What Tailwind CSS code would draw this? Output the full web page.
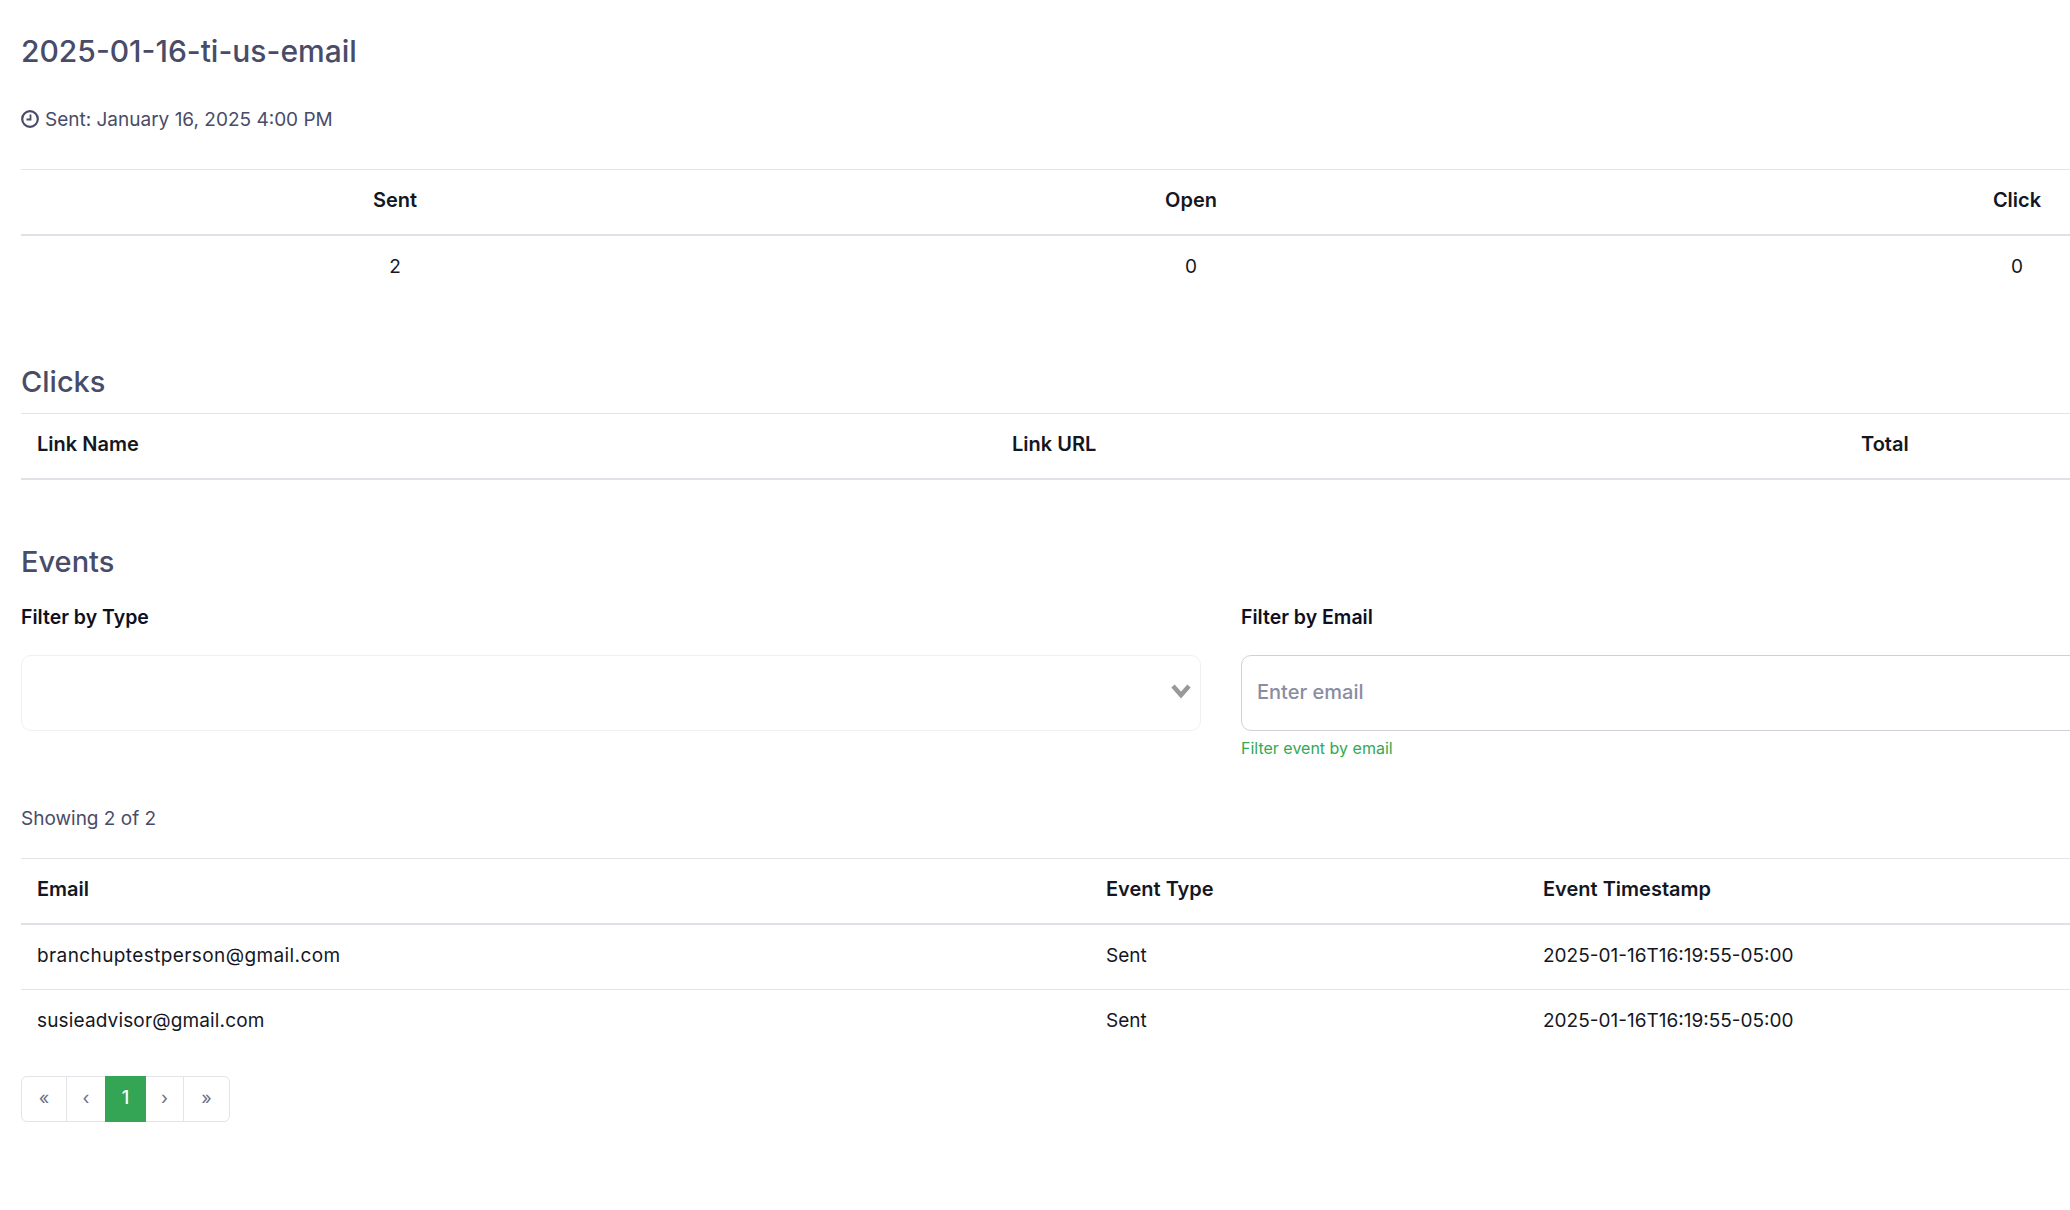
<!DOCTYPE html>
<html lang="en">
<head>
    <meta charset="UTF-8">
    <meta name="viewport" content="width=device-width, initial-scale=1.0">
    <title>2025-01-16-ti-us-email</title>
    <script src="https://cdn.jsdelivr.net/npm/@tailwindcss/browser@4"></script>
</head>
<body class="bg-white overflow-hidden h-screen font-['Inter',sans-serif] text-[19px] text-[#14171f]">
    <div class="w-[2421px] pl-[21px] pt-[31px]">
        <h1 class="text-[30px] leading-[40px] font-medium text-[#484c68]">2025-01-16-ti-us-email</h1>

        <div class="flex items-center gap-[6px] mt-[34px] h-[30px] text-[#484c68]">
            <svg class="w-[18px] h-[18px] -mt-[2px]" viewBox="0 0 18 18" fill="none" stroke="#484c68" stroke-width="2.2">
                <circle cx="9" cy="9" r="7.8"/>
                <path d="M9.5 4.5V9.5H5.5" stroke-width="1.8"/>
            </svg>
            <span>Sent: January 16, 2025 4:00 PM</span>
        </div>

        <!-- Summary -->
        <table class="mt-[34px] w-[2400px] table-fixed border-separate border-spacing-0 text-center">
            <thead>
                <tr>
                    <th class="w-[748px] h-[67px] pb-[4px] border-t border-b-2 border-t-[#e3e4e8] border-b-[#dee2e6] text-[20px] font-semibold">Sent</th>
                    <th class="w-[844px] h-[67px] pb-[4px] border-t border-b-2 border-t-[#e3e4e8] border-b-[#dee2e6] text-[20px] font-semibold">Open</th>
                    <th class="h-[67px] pb-[4px] border-t border-b-2 border-t-[#e3e4e8] border-b-[#dee2e6] text-[20px] font-semibold">Click</th>
                </tr>
            </thead>
            <tbody>
                <tr>
                    <td class="h-[64px] pb-[2px]">2</td>
                    <td class="h-[64px] pb-[2px]">0</td>
                    <td class="h-[64px] pb-[2px]">0</td>
                </tr>
            </tbody>
        </table>

        <!-- Clicks -->
        <h2 class="mt-[62px] mb-[11px] text-[29px] leading-[40px] font-medium text-[#484c68]">Clicks</h2>
        <table class="w-[2400px] table-fixed border-separate border-spacing-0 text-left">
            <thead>
                <tr>
                    <th class="w-[975px] h-[67px] px-4 pb-[4px] border-t border-b-2 border-t-[#e3e4e8] border-b-[#dee2e6] text-[20px] font-semibold">Link Name</th>
                    <th class="w-[849px] h-[67px] px-4 pb-[4px] border-t border-b-2 border-t-[#e3e4e8] border-b-[#dee2e6] text-[20px] font-semibold">Link URL</th>
                    <th class="h-[67px] px-4 pb-[4px] border-t border-b-2 border-t-[#e3e4e8] border-b-[#dee2e6] text-[20px] font-semibold">Total</th>
                </tr>
            </thead>
        </table>

        <!-- Events -->
        <h2 class="mt-[62px] text-[29px] leading-[40px] font-medium text-[#484c68]">Events</h2>
        <div class="grid grid-cols-[1180px_1fr] gap-x-[40px] mt-[20px]">
            <div>
                <label class="block h-[30px] leading-[30px] text-[19.5px] font-semibold text-[#0e1020]">Filter by Type</label>
                <div class="relative mt-[23px] h-[76px] rounded-[10px] border border-[#eff0f2] bg-white">
                    <svg class="absolute right-[9px] top-[27px] w-[20px] h-[16px]" viewBox="0 0 20 16" fill="none" stroke="#999999" stroke-width="4.5">
                        <path d="M2 3L10 12L18 3"/>
                    </svg>
                </div>
            </div>
            <div>
                <label class="block h-[30px] leading-[30px] text-[19.5px] font-semibold text-[#0e1020]">Filter by Email</label>
                <input type="text" placeholder="Enter email" class="block w-full mt-[23px] h-[76px] px-[15px] pb-[2px] rounded-[10px] border border-[#ced1da] bg-white outline-none text-[20px] font-medium placeholder:text-[#8a8da0]">
                <p class="mt-[7px] h-[20px] leading-[20px] text-[16px] text-[#34a853]">Filter event by email</p>
            </div>
        </div>

        <p class="mt-[46px] h-[30px] leading-[30px] text-[#484c68]">Showing 2 of 2</p>

        <table class="mt-[24px] w-[2400px] table-fixed border-separate border-spacing-0 text-left">
            <thead>
                <tr>
                    <th class="w-[1069px] h-[67px] px-4 pb-[4px] border-t border-b-2 border-t-[#e3e4e8] border-b-[#dee2e6] text-[20px] font-semibold">Email</th>
                    <th class="w-[437px] h-[67px] px-4 pb-[4px] border-t border-b-2 border-t-[#e3e4e8] border-b-[#dee2e6] text-[20px] font-semibold">Event Type</th>
                    <th class="h-[67px] px-4 pb-[4px] border-t border-b-2 border-t-[#e3e4e8] border-b-[#dee2e6] text-[20px] font-semibold">Event Timestamp</th>
                </tr>
            </thead>
            <tbody>
                <tr>
                    <td class="h-[65px] px-4 pb-[2px] border-b border-[#e3e4e8] tracking-[0.4px]">branchuptestperson@gmail.com</td>
                    <td class="h-[65px] px-4 pb-[2px] border-b border-[#e3e4e8]">Sent</td>
                    <td class="h-[65px] px-4 pb-[2px] border-b border-[#e3e4e8]">2025-01-16T16:19:55-05:00</td>
                </tr>
                <tr>
                    <td class="h-[64px] px-4 pb-[2px] tracking-[0.15px]">susieadvisor@gmail.com</td>
                    <td class="h-[64px] px-4 pb-[2px]">Sent</td>
                    <td class="h-[64px] px-4 pb-[2px]">2025-01-16T16:19:55-05:00</td>
                </tr>
            </tbody>
        </table>

        <!-- Pagination -->
        <div class="flex mt-[22px] w-[209px] h-[46px] rounded-[6px] border border-[#e3e4e8] text-[18px] text-[#6b7085]">
            <span class="flex items-center justify-center w-[45px] pb-[3px] border-r border-[#e3e4e8]">«</span>
            <span class="flex items-center justify-center w-[38px] pb-[3px]">‹</span>
            <span class="flex items-center justify-center w-[41px] -my-px pb-[3px] bg-[#34a555] text-white font-medium">1</span>
            <span class="flex items-center justify-center w-[38px] pb-[3px] border-r border-[#e3e4e8]">›</span>
            <span class="flex items-center justify-center flex-1 pb-[3px]">»</span>
        </div>
    </div>
</body>
</html>
